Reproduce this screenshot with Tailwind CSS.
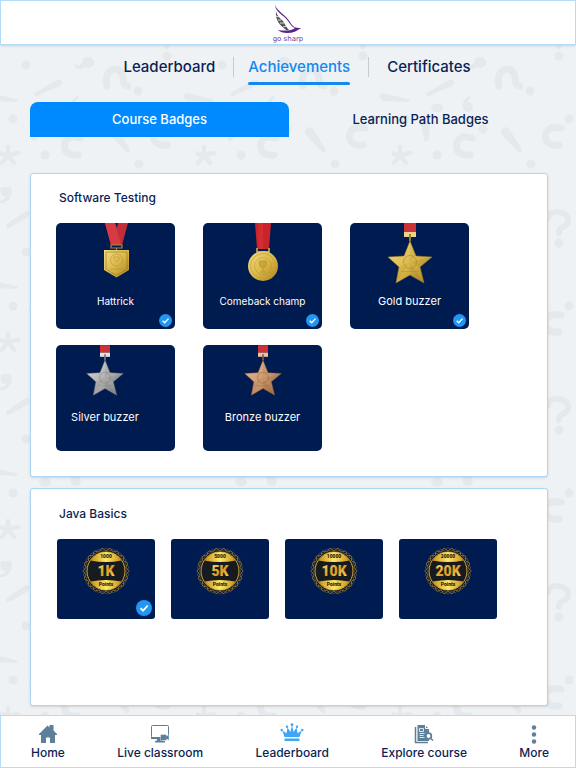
<!DOCTYPE html>
<html lang="en">
<head>
    <meta charset="UTF-8">
    <meta name="viewport" content="width=device-width, initial-scale=1.0">
    <title>go sharp - Achievements</title>
    <script src="https://cdn.jsdelivr.net/npm/@tailwindcss/browser@4"></script>
</head>
<body class="relative isolate flex min-h-screen flex-col bg-[#eef2f5] font-['Inter','Noto_Sans',sans-serif] font-medium text-[#0b1f56]">

    <!-- punctuation wallpaper -->
    <svg class="absolute inset-0 -z-10 h-full w-full" aria-hidden="true">
        <defs>
            <pattern id="marks" width="196" height="187" patternUnits="userSpaceOnUse">
                <g id="tile" fill="#e5e9ec">
                    <circle cx="26" cy="65" r="4.5"/>
                    <circle cx="13" cy="119" r="4.5"/>
                    <circle cx="138" cy="91" r="4.5"/>
                    <circle cx="167" cy="56" r="4.5"/>
                    <circle cx="45" cy="155" r="4.5"/>
                    <circle cx="139" cy="164" r="4.5"/>
                    <circle cx="91" cy="129" r="4.5"/>
                    <circle cx="177" cy="119" r="4.5"/>
                    <ellipse cx="45" cy="108" rx="6" ry="4.5"/>
                    <path d="M87 57a6 5.500 0 1 1-2 10c-5 4-11 2-11-3 3 2 6 1 8-1 0-3 2-6 5-6z"/>
                    <path d="M1 1a6 6 0 0 1 11 3c0 8-6 13-12 12l-1-2c4-1 6-2 7-4-4 0-7-5-5-9z"/>
                    <path d="M78 96c-5 1-8 6-7 12a5 5 0 1 0 5-6c0-2 1-3 3-4z"/>
                    <path d="M36 92 57 80c5-2 8 3 3 6l-23 10c-3 1-4-2-1-4z"/>
                    <path d="M7 37 24 25c5-3 8 2 3 6L9 41c-3 1-4-2-2-4z"/>
                    <path d="M187 93c-5 0-4 8 2 8l23 1c2 0 2-3 0-3z"/>
                    <path d="M-9 93c-5 0-4 8 2 8l23 1c2 0 2-3 0-3z"/>
                    <path d="M29 123c0-3 8-3 9 0l-1 16c-1 3-5 3-5 0z"/>
                    <path d="M110 135c-4-6 4-11 8-5l11 18c2 3-1 6-4 3z"/>
                    <path d="M107 86c-5-16 13-24 16-9 0 6 1 9 5 9" fill="none" stroke="#e5e9ec" stroke-width="7" stroke-linecap="round"/>
                    <path d="M156 31c3-10 22-7 20 4-1 6-10 4-9 11" fill="none" stroke="#e5e9ec" stroke-width="6" stroke-linecap="round"/>
                    <path d="M80 138c-5 0-5-2-10-1-9 4-8 20 8 18" fill="none" stroke="#e5e9ec" stroke-width="7" stroke-linecap="round"/>
                    <path d="M169 128c-5 0-5-1-10 0-9 4-8 19 8 17" fill="none" stroke="#e5e9ec" stroke-width="7" stroke-linecap="round"/>
                    <path d="M8 155v-8M8 155l10-2M8 155l-10-2M8 155l6 8M8 155l-6 8" fill="none" stroke="#e5e9ec" stroke-width="4.500" stroke-linecap="round"/>
                </g>
            </pattern>
            <linearGradient id="gold" x1="0" y1="0" x2="1" y2="1">
                <stop offset="0" stop-color="#f3dc86"/><stop offset=".5" stop-color="#dcba4b"/><stop offset="1" stop-color="#a98220"/>
            </linearGradient>
            <linearGradient id="silver" x1="0" y1="0" x2="1" y2="1">
                <stop offset="0" stop-color="#dedede"/><stop offset=".5" stop-color="#b0b0b0"/><stop offset="1" stop-color="#7c7c7e"/>
            </linearGradient>
            <linearGradient id="bronze" x1="0" y1="0" x2="1" y2="1">
                <stop offset="0" stop-color="#e8bf9c"/><stop offset=".5" stop-color="#cf9a70"/><stop offset="1" stop-color="#9c6433"/>
            </linearGradient>
            <linearGradient id="foil" x1="0" y1="0" x2="1" y2="0">
                <stop offset="0" stop-color="#c88f18"/><stop offset=".5" stop-color="#ffe867"/><stop offset="1" stop-color="#c88f18"/>
            </linearGradient>
            <linearGradient id="foil-text" x1="0" y1="0" x2="1" y2="1">
                <stop offset="0" stop-color="#ffe06a"/><stop offset=".5" stop-color="#dd9a22"/><stop offset="1" stop-color="#ffd858"/>
            </linearGradient>
        </defs>
        <rect width="100%" height="100%" fill="url(#marks)"/>
    </svg>

    <header class="flex h-[45px] justify-center border border-[#b3dcf8] bg-white pt-1 shadow-sm">
        <a href="#" aria-label="go sharp">
            <svg width="36" height="38" viewBox="0 0 36 38">
                <path d="M5 0c3 7 10 9 15 17 3 5 5 6 11 6-4 3-8 5-14 5-4 0-7-1-9-3 7 1 13 1 17-2-3-1-5-4-7-7C14 10 6 8 5 0z" fill="#5a2390"/>
                <path d="M6 6c1 5 4 7 7 10 2 3 3 6 6 9l-2 .5C10 21 5 15 6 6z" fill="#555"/>
                <path d="m6 11 3 1m-1 3 3 0m-1 3 4 0m-1 4 4-1" stroke="#fff" stroke-width=".8"/>
                <text x="18" y="36" text-anchor="middle" font-family="DejaVu Sans" font-size="7" fill="#6b3a99">go sharp</text>
            </svg>
        </a>
    </header>

    <main class="flex flex-1 flex-col pr-7 pb-[9px] pl-[30px]">
        <nav class="flex justify-center pt-3 pl-4 text-[15px] leading-5">
            <a href="#" class="mr-[18px]">Leaderboard</a>
            <a href="#" aria-current="page" class="relative border-l border-[#c3ccd5] pr-[18px] pl-[14px] text-[#1389f0] after:absolute after:top-[25px] after:right-[18px] after:left-[14px] after:h-[3px] after:rounded-full after:bg-[#1389f0]">Achievements</a>
            <a href="#" class="border-l border-[#c3ccd5] pl-[18px]">Certificates</a>
        </nav>

        <div role="tablist" class="mt-[25px] grid grid-cols-2 text-[13px]">
            <button type="button" role="tab" aria-selected="true" class="h-[35px] rounded-t-lg bg-[#008aff] text-white">Course Badges</button>
            <button type="button" role="tab" aria-selected="false" class="h-[35px] pl-1">Learning Path Badges</button>
        </div>

        <section class="mt-9 rounded-[3px] border border-[#a9d7f6] bg-white px-[25px] pt-[14px] pb-[25px] shadow-sm">
            <h2 class="pl-[3px] text-[12px] leading-5">Software Testing</h2>
            <ul id="medals" class="mt-[15px] flex flex-wrap gap-x-7 gap-y-4 text-white"></ul>
        </section>

        <section class="mt-[11px] flex-1 rounded-[3px] border border-[#a9d7f6] bg-white px-[26px] pt-[15px] pb-6 shadow-sm">
            <h2 class="pl-[2px] text-[12px] leading-5">Java Basics</h2>
            <ul id="points" class="mt-[15px] flex flex-wrap gap-4"></ul>
        </section>
    </main>

    <nav class="flex h-[53px] justify-between border border-[#b3dcf8] bg-white pt-[7px] pr-[26px] pl-[30px] text-[12px] leading-4">
        <a href="#" class="flex flex-col items-center gap-px">
            <svg width="20" height="21" viewBox="0 0 20 21" fill="#5e7f99"><path d="M1 11 9.500 2.500l2 2V2h4v5.500L19 11v1h-2v8h-5v-5.500H8V20H3v-8H1z"/></svg>
            Home
        </a>
        <a href="#" class="flex flex-col items-center gap-px">
            <svg width="20" height="21" viewBox="0 0 20 21">
                <rect x="1.500" y="2.500" width="17" height="12" rx="1" fill="#fff" stroke="#5e7f99"/>
                <path d="M1 14h10v2H1zM7 16h5l1 2h2v1.500H5V18h1.500z" fill="#5e7f99"/>
                <path d="M10.500 11.500h6v1.500l2.500-1.500v6L16.500 16v1.500h-6z" fill="#5e7f99" stroke="#fff" stroke-width=".4"/>
            </svg>
            Live classroom
        </a>
        <a href="#" aria-current="page" class="flex flex-col items-center gap-px">
            <svg width="24" height="21" viewBox="0 0 24 21" fill="#3fa5f5">
                <path d="M4.500 14 2.300 7.500l4.200 2.700L7.500 4.500l3 4.500L12 2l1.500 7 3-4.500 1 5.700 4.200-2.700L19.500 14zM4.500 15.500h15V18h-15z"/>
                <circle cx="1.700" cy="7" r="1.200"/><circle cx="7" cy="3.800" r="1.200"/><circle cx="12" cy="1.700" r="1.400"/><circle cx="17" cy="3.800" r="1.200"/><circle cx="22.300" cy="7" r="1.200"/>
            </svg>
            Leaderboard
        </a>
        <a href="#" class="flex flex-col items-center gap-px">
            <svg width="20" height="21" viewBox="0 0 20 21">
                <path d="M1.500 4v15.500H14" fill="none" stroke="#5e7f99" stroke-width="1.500"/>
                <path d="M3.500 2H11l4 4v12H3.500z" fill="#5e7f99"/>
                <path d="M11.500 2v3.500H15" fill="none" stroke="#fff"/>
                <path d="M5.500 5.500h4v3h-4zM5.500 10.500h5M5.500 12.500h4M5.500 14.500h5" fill="none" stroke="#fff" stroke-width=".8"/>
                <circle cx="14.500" cy="13" r="2.800" fill="#fff" stroke="#5e7f99" stroke-width="1.800"/>
                <path d="m16.500 15 2.500 2.500" stroke="#5e7f99" stroke-width="1.500"/>
            </svg>
            Explore course
        </a>
        <a href="#" class="flex flex-col items-center gap-px">
            <svg width="20" height="21" viewBox="0 0 20 21" fill="#5e7f99"><circle cx="10" cy="4.500" r="2.200"/><circle cx="10" cy="11.500" r="2.200"/><circle cx="10" cy="18.500" r="2.200"/></svg>
            More
        </a>
    </nav>

    <script>
        const star = (fill, edge, clasp) => `
            <path d="M24 0h12v9H24z" fill="#cb3238"/>
            <path d="M24 9h12v5H24z" fill="${clasp}"/>
            <path d="M30 11v7" stroke="${edge}" stroke-width="2"/>
            <path d="m30 18 6 15 16 1-12 10 4 16-14-8-14 8 3-16L8 34l16-1z" fill="url(#${fill})" stroke="${edge}" stroke-width=".5"/>
            <path d="m30 18 6 15-6 6zM52 34 40 44l-10-5zM44 60l-14-8v-13zM16 60l3-16 11-5z" fill="#000" opacity=".05"/>
            <circle cx="30" cy="39" r="6.500" fill="none" stroke="${edge}" stroke-width="1" opacity=".5"/>
            <path d="M21 48.500h18" stroke="${edge}" opacity=".3"/>`;

        const shield = `
            <path d="M19 0h10l2 5 1-5h10l-6 22H25z" fill="#c22e38"/>
            <path d="M19 0h10l6 22H25z" fill="#d63b42"/>
            <path d="M25 22h11v3H25zM30.500 25v3" fill="none" stroke="#a8893b" stroke-width="1.200"/>
            <path d="M18 27h25v20l-12.500 7.500L18 47z" fill="url(#gold)"/>
            <path d="M20 29h21v17l-10.500 6.500L20 46z" fill="none" stroke="#94711d" stroke-width=".6"/>
            <circle cx="30.500" cy="37" r="6" fill="none" stroke="#b18c2d" opacity=".5"/>
            <path d="M28 34h5v2l-2.500 3-2.500-3zM24 46h13" fill="none" stroke="#b18c2d" opacity=".5"/>`;

        const disc = `
            <path d="M22 0h16l-2 26H24z" fill="#c9242b"/>
            <path d="M25 0h5v26h-4z" fill="#dc3238" opacity=".6"/>
            <path d="M24 25v4h12v-4" fill="none" stroke="#d7b95b" stroke-width="1.500"/>
            <circle cx="30" cy="43" r="15" fill="url(#gold)"/>
            <circle cx="30" cy="43" r="12.500" fill="none" stroke="#c39c35" stroke-width=".7"/>
            <circle cx="30" cy="43" r="8.500" fill="none" stroke="#b18c2d" opacity=".4"/>
            <path d="M26.500 38h7v3.500c0 4-7 4-7 0zM30 45v3.500M27.500 49h5" fill="#c79c2a" stroke="#b18c2d" opacity=".7"/>`;

        const check = '<path d="m4.500 8.200 2.500 2.500 4.700-5" fill="none" stroke="#fff" stroke-width="1.700"/>';

        const medals = [
            { name: 'Hattrick',       art: shield, text: 'text-[10px]', done: true },
            { name: 'Comeback champ', art: disc,   text: 'text-[10px]', done: true },
            { name: 'Gold buzzer',    art: star('gold', '#a17c24', '#ecd48a'),   text: 'text-[11px]', done: true },
            { name: 'Silver buzzer',  art: star('silver', '#777', '#e2e2df'),    text: 'text-[11px]', small: true, shift: 'pr-[21px]' },
            { name: 'Bronze buzzer',  art: star('bronze', '#8d5a33', '#e8c3a0'), text: 'text-[11px]', small: true },
        ];

        document.getElementById('medals').innerHTML = medals.map(m => `
            <li class="relative flex h-[106px] w-[119px] flex-col items-center rounded-[5px] bg-[#001b50] ${m.shift || ''}">
                <svg class="${m.small ? 'h-[52px] w-[50px]' : 'h-[62px] w-[60px]'}" viewBox="0 0 60 62" aria-hidden="true">${m.art}</svg>
                <span class="${m.small ? 'mt-3' : 'mt-2'} ${m.text} leading-4 font-normal">${m.name}</span>
                ${m.done ? `<svg class="absolute right-[3px] bottom-[2px] size-[13px]" viewBox="0 0 16 16" role="img" aria-label="Earned"><circle cx="8" cy="8" r="8" fill="#2196f3"/>${check}</svg>` : ''}
            </li>`).join('');

        // wavy ring around the points badges
        function scallop(phase) {
            let d = '';
            for (let i = 0; i < 180; i++) {
                const a = i * Math.PI / 90;
                const r = 21.6 + 1.3 * Math.cos(18 * a + phase);
                d += (i ? 'L' : 'M') + (24 + r * Math.cos(a)).toFixed(2) + ' ' + (24 + r * Math.sin(a)).toFixed(2);
            }
            return d + 'z';
        }

        const points = [
            { value: '1000',  label: '1K', done: true },
            { value: '5000',  label: '5K' },
            { value: '10000', label: '10K' },
            { value: '20000', label: '20K' },
        ];

        document.getElementById('points').innerHTML = points.map(p => `
            <li class="relative flex h-20 w-[98px] justify-center rounded-[3px] bg-[#001b50] pt-2">
                <svg class="size-12" viewBox="0 0 48 48" font-family="Roboto" text-anchor="middle">
                    <path d="${scallop(0)}" fill="#141820" stroke="#a98a3c" stroke-width=".8"/>
                    <path d="${scallop(Math.PI)}" fill="none" stroke="#a98a3c" stroke-width=".4"/>
                    <circle cx="24" cy="24" r="19" fill="#171b20" stroke="#e4b63c" stroke-width=".9"/>
                    <path d="M8.500 13.500a18.500 18.500 0 0 1 31 0q-15.500 3-31 0zM8.500 34.500a18.500 18.500 0 0 0 31 0q-15.500-3-31 0z" fill="url(#foil)"/>
                    <text x="24" y="11" font-size="5" font-weight="900" fill="#2b2104">${p.value}</text>
                    <text x="24" y="29" font-size="14" font-weight="900" fill="url(#foil-text)">${p.label}</text>
                    <text x="24" y="39" font-size="5" font-weight="900" fill="#2b2104">Points</text>
                </svg>
                ${p.done ? `<svg class="absolute right-[3px] bottom-[3px] size-4" viewBox="0 0 16 16" role="img" aria-label="Earned"><circle cx="8" cy="8" r="8" fill="#2196f3"/>${check}</svg>` : ''}
            </li>`).join('');
    </script>
</body>
</html>
